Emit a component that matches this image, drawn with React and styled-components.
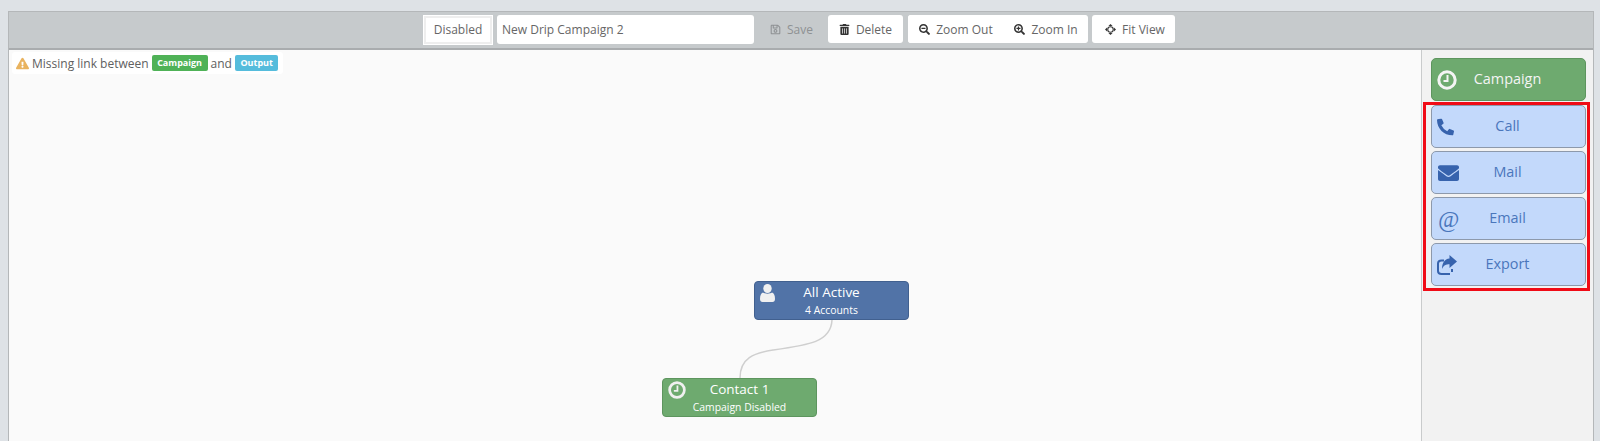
import React from 'react'
import styled, { createGlobalStyle } from 'styled-components'
import {
  FaExclamationTriangle,
  FaRegSave,
  FaTrashAlt,
  FaSearchMinus,
  FaSearchPlus,
  FaPhoneAlt,
  FaEnvelope,
} from 'react-icons/fa'

const GlobalStyle = createGlobalStyle`
html, body {
  margin: 0;
  height: 100%;
  overflow: hidden;
  background: #dee2e6;
  font-family: "Open Sans", "Liberation Sans", sans-serif;
  color: #555;
}
`

const Panel = styled.div`
  margin: 11px 6px 0 8px;
  height: 430px;
  display: flex;
  flex-direction: column;
  border: 1px solid #b4b7b9;
  border-bottom: none;
  box-sizing: border-box;
`

const Toolbar = styled.div`
  height: 38px;
  flex: none;
  box-sizing: border-box;
  background: #c6cacc;
  border-bottom: 2px solid #a9acae;
  display: flex;
  align-items: flex-start;
  padding: 3px 0 0 415px;
`

const StatusBox = styled.div`
  width: 68px;
  height: 28px;
  box-sizing: border-box;
  background: #fff;
  border: 2px solid #eee;
  outline: 1px solid #fff;
  font-size: 12px;
  line-height: 24px;
  text-align: center;
  color: #666;
  margin: 1px 5px 0 0;
`

const NameInput = styled.div`
  width: 257px;
  height: 29px;
  box-sizing: border-box;
  background: #fff;
  border-radius: 3px;
  font-size: 12px;
  line-height: 30px;
  padding-left: 5px;
  color: #666;
  margin-right: 4px;
`

const ToolButton = styled.div`
  height: 28px;
  box-sizing: border-box;
  background: ${(props) => (props.$off ? 'transparent' : '#fff')};
  color: ${(props) => (props.$off ? '#8e9193' : '#666')};
  border-radius: 3px;
  display: flex;
  align-items: center;
  justify-content: center;
  gap: 6px;
  font-size: 12px;
  width: ${(props) => props.$w}px;
  padding-left: ${(props) => props.$pad || 0}px;
  margin-right: ${(props) => props.$gap || 5}px;

  svg {
    width: 11px;
    height: 11px;
    color: ${(props) => (props.$off ? '#8e9193' : '#333')};
  }
`

const ZoomGroup = styled.div`
  width: 180px;
  height: 28px;
  background: #fff;
  border-radius: 3px;
  display: flex;
  margin-right: 4px;
`

const Main = styled.div`
  flex: 1;
  display: flex;
  min-height: 0;
`

const Canvas = styled.div`
  flex: 1;
  position: relative;
  background: #fafafa;
  overflow: hidden;
`

const Notice = styled.div`
  position: absolute;
  left: 3px;
  top: 2px;
  height: 22px;
  padding: 0 5px 0 4px;
  background: #fff;
  border-radius: 3px;
  display: flex;
  align-items: center;
  gap: 3px;
  font-size: 12px;
  color: #606060;

  svg {
    width: 13px;
    height: 13px;
    color: #e9b35f;
  }
`

const Badge = styled.span`
  background: ${(props) => props.$bg};
  color: #fff;
  font-size: 9px;
  font-weight: 700;
  line-height: 16px;
  padding: 0 5.5px;
  border-radius: 2px;
`

const Node = styled.div`
  position: absolute;
  left: ${(props) => props.$x}px;
  top: ${(props) => props.$y}px;
  width: 155px;
  height: 39px;
  box-sizing: border-box;
  background: ${(props) => props.$bg};
  border: 1px solid ${(props) => props.$line};
  border-radius: 4px;
  color: #fff;
  text-align: center;
  padding-top: 1px;
`

const NodeTitle = styled.div`
  font-size: 13.5px;
  line-height: 18px;
`

const NodeSub = styled.div`
  font-size: 10.4px;
  line-height: 18px;
`

const NodeIcon = styled.span`
  position: absolute;
  left: 5px;
  top: 2px;
  color: #f0f0f0;
  display: flex;
`

const Edge = styled.svg`
  position: absolute;
  left: 0;
  top: 0;
  pointer-events: none;
`

const Side = styled.div`
  width: 172px;
  flex: none;
  box-sizing: border-box;
  background: #f2f2f2;
  border-left: 1px solid #c9cbcc;
  padding: 8px 0 0 9px;
  display: flex;
  flex-direction: column;
  gap: 3px;
  position: relative;
`

const Tile = styled.div`
  width: 155px;
  height: 43px;
  flex: none;
  box-sizing: border-box;
  background: ${(props) => props.$bg};
  border: 1px solid ${(props) => props.$line};
  border-radius: 5px;
  color: ${(props) => props.$fg};
  font-size: 14.4px;
  display: flex;
  align-items: center;
  justify-content: center;
  padding: 0 2px 2px 0;
  position: relative;
  margin-bottom: ${(props) => props.$gap || 0}px;
`

const TileIcon = styled.span`
  position: absolute;
  left: ${(props) => props.$left || 6}px;
  top: 50%;
  transform: translateY(-50%);
  display: flex;
  color: ${(props) => props.$fg};
`

const AtSign = styled.span`
  font-family: "Liberation Serif", serif;
  font-style: italic;
  font-size: 23px;
  line-height: 23px;
`

const Highlight = styled.div`
  position: absolute;
  left: 1px;
  top: 52px;
  width: 167px;
  height: 189px;
  box-sizing: border-box;
  border: 3px solid #f00b16;
  pointer-events: none;
`

const ClockIcon = ({ size, color }) => (
  <svg width={size} height={size} viewBox="0 0 20 20" fill="none" stroke={color}>
    <circle cx="10" cy="10" r="8.2" strokeWidth="3" />
    <path d="M10.5 5v6H6.5" strokeWidth="2" />
  </svg>
)

const UserIcon = () => (
  <svg width="15" height="18" viewBox="0 0 15 18" fill="#f0f0f0">
    <ellipse cx="7.5" cy="4.5" rx="4.2" ry="4.5" />
    <path d="M3 8.5C4.5 10 10.5 10 12 8.5C14 9 15 11.5 15 15C15 17 14 18 12.5 18H2.5C1 18 0 17 0 15C0 11.5 1 9 3 8.5Z" />
  </svg>
)

const ExportIcon = () => (
  <svg width="20" height="20" viewBox="0 0 20 20">
    <path
      d="M13 18.9H4.5C2.5 18.9 1 17.9 1 15.9V8.5C1 6.5 2.5 5.5 4.5 5.5H7M15 14V17"
      fill="none"
      stroke="#3763ad"
      strokeWidth="2"
    />
    <path d="M12.5 0L20 6.5L12.5 13V9.2C9 9.2 6.5 10.2 5 14C5 8.5 7.5 4 12.5 3.6Z" fill="#3763ad" />
  </svg>
)

const FitIcon = () => (
  <svg viewBox="0 0 16 16" fill="#333">
    <path d="M8 0l3 3H5zM8 16l-3-3h6zM0 8l3-3v6zM16 8l-3 3V5z" />
    <circle cx="8" cy="8" r="4" fill="none" stroke="#333" strokeWidth="1.6" />
  </svg>
)

const App = () => {
  return (
    <>
      <GlobalStyle />
      <Panel>
        <Toolbar>
          <StatusBox>Disabled</StatusBox>
          <NameInput>New Drip Campaign 2</NameInput>
          <ToolButton $off $w={67} $gap={3}><FaRegSave />Save</ToolButton>
          <ToolButton $w={75}><FaTrashAlt />Delete</ToolButton>
          <ZoomGroup>
            <ToolButton $w={96} $gap={1}><FaSearchMinus />Zoom Out</ToolButton>
            <ToolButton $w={82} $gap={1}><FaSearchPlus />Zoom In</ToolButton>
          </ZoomGroup>
          <ToolButton $w={83} $pad={3}><FitIcon />Fit View</ToolButton>
        </Toolbar>
        <Main>
          <Canvas>
            <Notice>
              <FaExclamationTriangle />
              Missing link between
              <Badge $bg="#4fb257">Campaign</Badge>
              and
              <Badge $bg="#55bcdc">Output</Badge>
            </Notice>
            <Edge width="1412" height="392" fill="none">
              <path
                d="M823 270C822 292 800 295 764 300C745 303 731 308 731 328"
                stroke="#cfcfcf"
                strokeWidth="1.5"
              />
            </Edge>
            <Node $x={745} $y={231} $bg="#5173a7" $line="#41608f">
              <NodeIcon><UserIcon /></NodeIcon>
              <NodeTitle>All Active</NodeTitle>
              <NodeSub>4 Accounts</NodeSub>
            </Node>
            <Node $x={653} $y={328} $bg="#6eaa6f" $line="#5d955e">
              <NodeIcon><ClockIcon size={18} color="#f0f0f0" /></NodeIcon>
              <NodeTitle>Contact 1</NodeTitle>
              <NodeSub>Campaign Disabled</NodeSub>
            </Node>
          </Canvas>
          <Side>
            <Tile $bg="#6eaa6f" $line="#5d955e" $fg="#f4f4f4" $gap={1}>
              <TileIcon $fg="#f4f4f4" $left={5}><ClockIcon size={20} color="#f4f4f4" /></TileIcon>
              Campaign
            </Tile>
            <Tile $bg="#c3d9fb" $line="#8d99ab" $fg="#4a76bb">
              <TileIcon $fg="#3763ad" $left={5}><FaPhoneAlt size={17} /></TileIcon>
              Call
            </Tile>
            <Tile $bg="#c3d9fb" $line="#8d99ab" $fg="#4a76bb">
              <TileIcon $fg="#3763ad"><FaEnvelope size={21} /></TileIcon>
              Mail
            </Tile>
            <Tile $bg="#c3d9fb" $line="#8d99ab" $fg="#4a76bb">
              <TileIcon $fg="#4a76bb"><AtSign>@</AtSign></TileIcon>
              Email
            </Tile>
            <Tile $bg="#c3d9fb" $line="#8d99ab" $fg="#4a76bb">
              <TileIcon $fg="#3763ad" $left={5}><ExportIcon /></TileIcon>
              Export
            </Tile>
            <Highlight />
          </Side>
        </Main>
      </Panel>
    </>
  )
}

export default App
